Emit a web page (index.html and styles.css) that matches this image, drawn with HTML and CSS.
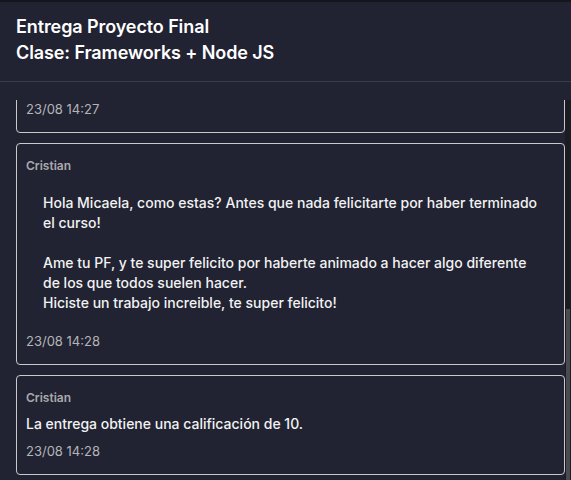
FILE: index.html
```html
<!DOCTYPE html>
<html lang="es">
<head>
<meta charset="utf-8">
<title>Entrega Proyecto Final</title>
<link rel="stylesheet" href="styles.css">
</head>
<body>
<div class="page">
  <header class="head">
    <h1 class="title">Entrega Proyecto Final<br>Clase: Frameworks + Node JS</h1>
  </header>
  <div class="pane">
    <div class="thread">
      <div class="list">
        <article class="card">
          <div class="author">Micaela</div>
          <div class="rich">
            <p>Hola profe! Te dejo la entrega del proyecto final.</p>
            <p>Repositorio: github.com/micaela/proyecto-final<br>Deploy: proyecto-final.vercel.app<br>Incluye login, carrito de compras y panel de administración.</p>
            <p>Cualquier comentario me avisás. ¡Gracias!</p>
          </div>
          <div class="time">22/08 21:03</div>
        </article>
        <article class="card">
          <div class="author">Cristian</div>
          <div class="rich">
            <p>Hola Micaela! Estuve revisando el proyecto y está muy completo.</p>
            <p>Te dejo algunos comentarios en el repositorio para que los tengas en cuenta.<br>Ya te paso la devolución completa.</p>
          </div>
          <div class="time">23/08 14:27</div>
        </article>
        <article class="card">
          <div class="author">Cristian</div>
          <div class="rich">
            <p>Hola Micaela, como estas? Antes que nada felicitarte por haber terminado el curso!</p>
            <p>Ame tu PF, y te super felicito por haberte animado a hacer algo diferente de los que todos suelen hacer.<br>Hiciste un trabajo increible, te super felicito!</p>
          </div>
          <div class="time">23/08 14:28</div>
        </article>
        <article class="card">
          <div class="author">Cristian</div>
          <div class="text">La entrega obtiene una calificación de 10.</div>
          <div class="time">23/08 14:28</div>
        </article>
      </div>
    </div>
    <div class="scrollbar" aria-hidden="true"><div class="thumb"></div></div>
  </div>
</div>
</body>
</html>
```
FILE: styles.css
```css
html, body {
  margin: 0;
  height: 100%;
}

body {
  background: #212332;
  font-family: Inter, "Noto Sans", sans-serif;
  color: #f2f2f2;
}

.page {
  height: 100vh;
  box-sizing: border-box;
  border-top: 2px solid #15161c;
  display: flex;
  flex-direction: column;
}

.head {
  flex: none;
  padding: 12px 16px 15px;
  border-bottom: 1px solid #3a3c4b;
}

.title {
  margin: 0;
  font-size: 18px;
  line-height: 26px;
  font-weight: 600;
  letter-spacing: -0.1px;
  color: #ffffff;
}

.pane {
  flex: 1;
  min-height: 0;
  margin-top: 18px;
  display: flex;
}

.thread {
  flex: 1;
  min-width: 0;
  overflow-y: scroll;
  scrollbar-width: none;
  display: flex;
  flex-direction: column-reverse;
}

.thread::-webkit-scrollbar {
  display: none;
}

.scrollbar {
  flex: none;
  width: 6px;
  background: #1b1c21;
  display: flex;
  flex-direction: column;
  justify-content: flex-end;
}

.thumb {
  height: 171px;
  margin: 0 1px 0 0.5px;
  background: #4a4b51;
}

.list {
  flex: none;
  display: flex;
  flex-direction: column;
  gap: 10px;
  padding: 0 0 5px 16px;
}

.card {
  border: 1px solid #c9c9cc;
  border-radius: 4px;
  padding: 14px 9px;
  display: flex;
  flex-direction: column;
  gap: 8px;
}

.author {
  font-size: 12px;
  line-height: 16px;
  font-weight: 600;
  color: #a9a9ad;
}

.text,
.rich {
  font-size: 14px;
  line-height: 20px;
  font-weight: 500;
  color: #f2f2f2;
}

.rich {
  margin: 11px 0;
  padding: 0 17px;
}

.rich p {
  margin: 0;
}

.rich p + p {
  margin-top: 20px;
}

.time {
  font-size: 13px;
  line-height: 18px;
  color: #b4b4b8;
}
```
